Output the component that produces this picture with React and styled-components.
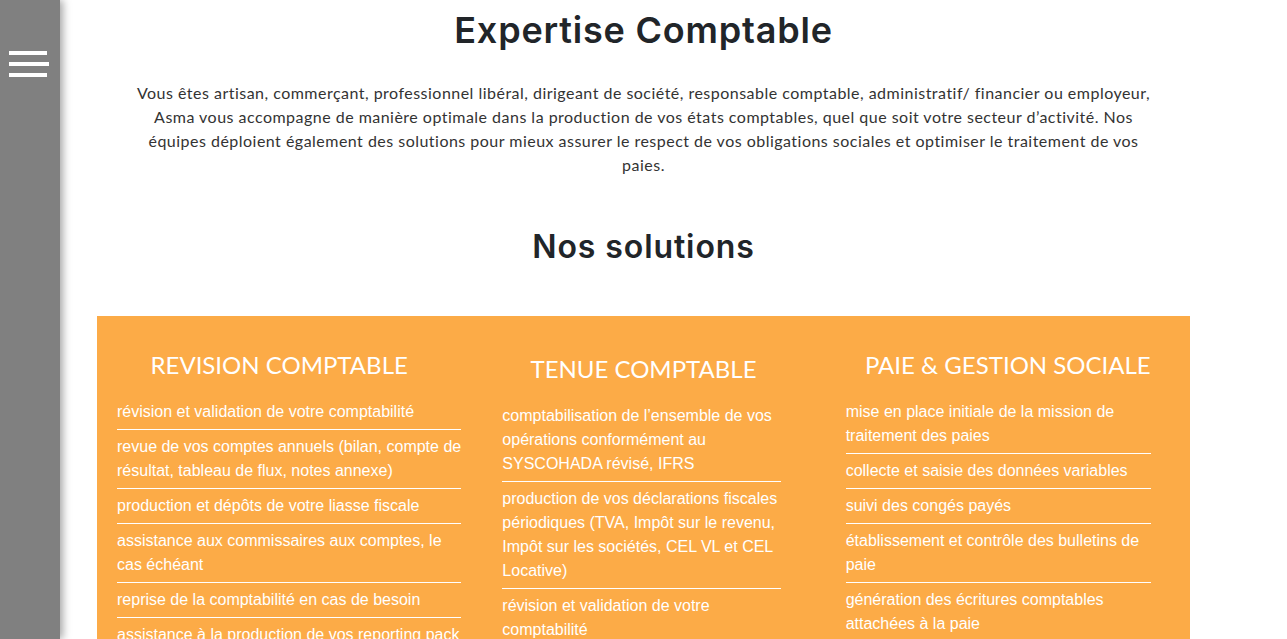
import React from 'react'
import styled, { createGlobalStyle } from 'styled-components'

const GlobalStyle = createGlobalStyle`
  body {
    margin: 0;
    background: #fff;
    font-family: Lato, "Open Sans", sans-serif;
    color: #212529;
  }
  * { box-sizing: border-box; }
`

const Sidebar = styled.nav`
  position: fixed;
  top: 0;
  left: 0;
  bottom: 0;
  width: 60px;
  background: #808080;
  box-shadow: 3px 0 8px rgba(0, 0, 0, 0.35);
  z-index: 10;
  padding: 51px 0 0 9px;
`

const Burger = styled.button`
  display: flex;
  flex-direction: column;
  gap: 7px;
  padding: 0;
  border: 0;
  background: none;
  cursor: pointer;
`

const Bar = styled.span`
  display: block;
  height: 4px;
  width: ${props => props.width || '38px'};
  background: #fff;
`

const Main = styled.main`
  display: flex;
  flex-direction: column;
  align-items: center;
  padding-top: 9px;
`

const Title = styled.h1`
  margin: 0;
  font-family: Inter, sans-serif;
  font-weight: 600;
  font-size: ${props => props.size || '36px'};
  letter-spacing: ${props => props.spacing || '0.8px'};
  line-height: 1.2;
  color: #212529;
  text-align: center;
  margin-top: ${props => props.marginTop || '0'};
`

const Intro = styled.p`
  margin: 29px 0 0;
  max-width: 1024px;
  font-size: 16px;
  line-height: 24px;
  letter-spacing: 0.48px;
  text-align: center;
  color: #333;
`

const Solutions = styled.section`
  width: 1093px;
  margin-top: 49px;
  background: #fcab47;
  display: grid;
  grid-template-columns: repeat(3, 1fr);
`

const Column = styled.div`
  padding: ${props => props.top || '34px'} ${props => props.right || '0'} 0 ${props => props.left || '20px'};
`

const ColumnTitle = styled.h3`
  margin: 0 0 16px;
  font-family: Lato, sans-serif;
  font-weight: 400;
  font-size: 24px;
  line-height: 29px;
  text-transform: uppercase;
  text-align: center;
  color: #fff;
  margin-left: ${props => props.shift || '0'};
  margin-right: ${props => props.shiftRight || '0'};
`

const List = styled.ul`
  list-style: none;
  margin: 0;
  padding: 0;
`

const Item = styled.li`
  padding: 5px 0;
  border-bottom: 1px solid #fff;
  font-family: "Liberation Sans", Arial, sans-serif;
  font-size: 16px;
  line-height: 24px;
  color: #fff;
`

const COLUMNS = [
  {
    title: 'Revision comptable',
    left: '20px', right: '0', top: '34px', shift: '-20px',
    items: [
      'révision et validation de votre comptabilité',
      'revue de vos comptes annuels (bilan, compte de résultat, tableau de flux, notes annexe)',
      'production et dépôts de votre liasse fiscale',
      'assistance aux commissaires aux comptes, le cas échéant',
      'reprise de la comptabilité en cas de besoin',
      'assistance à la production de vos reporting pack',
    ],
  },
  {
    title: 'Tenue comptable',
    left: '41px', right: '45px', top: '38px', shift: '-41px', shiftRight: '-45px',
    items: [
      'comptabilisation de l’ensemble de vos opérations conformément au SYSCOHADA révisé, IFRS',
      'production de vos déclarations fiscales périodiques (TVA, Impôt sur le revenu, Impôt sur les sociétés, CEL VL et CEL Locative)',
      'révision et validation de votre comptabilité',
    ],
  },
  {
    title: 'Paie & gestion sociale',
    left: '20px', right: '39px', top: '34px', shift: '-20px', shiftRight: '-39px',
    items: [
      'mise en place initiale de la mission de traitement des paies',
      'collecte et saisie des données variables',
      'suivi des congés payés',
      'établissement et contrôle des bulletins de paie',
      'génération des écritures comptables attachées à la paie',
    ],
  },
]

export default function App() {
  return (
    <>
      <GlobalStyle />
      <Sidebar>
        <Burger aria-label="menu">
          <Bar />
          <Bar width="40px" />
          <Bar />
        </Burger>
      </Sidebar>
      <Main>
        <Title>Expertise Comptable</Title>
        <Intro>
          Vous êtes artisan, commerçant, professionnel libéral, dirigeant de société, responsable comptable, administratif/ financier ou employeur, Asma vous accompagne de manière optimale dans la production de vos états comptables, quel que soit votre secteur d’activité. Nos équipes déploient également des solutions pour mieux assurer le respect de vos obligations sociales et optimiser le traitement de vos paies.
        </Intro>
        <Title size="32px" spacing="0.9px" marginTop="51px">Nos solutions</Title>
        <Solutions>
          {COLUMNS.map(col => (
            <Column key={col.title} left={col.left} right={col.right} top={col.top}>
              <ColumnTitle shift={col.shift} shiftRight={col.shiftRight}>{col.title}</ColumnTitle>
              <List>
                {col.items.map(item => <Item key={item}>{item}</Item>)}
              </List>
            </Column>
          ))}
        </Solutions>
      </Main>
    </>
  )
}
